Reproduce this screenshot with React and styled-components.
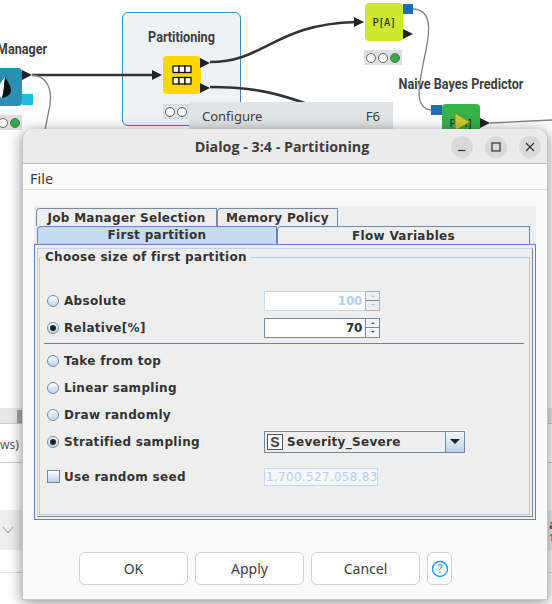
import React from 'react';
import styled, { createGlobalStyle } from 'styled-components';

const GlobalStyle = createGlobalStyle`
  html, body { margin: 0; padding: 0; background: #fff; }
  body { width: 552px; height: 604px; overflow: hidden; font-family: "DejaVu Sans", sans-serif; }
`;

const Page = styled.div`
  position: relative;
  width: 552px;
  height: 604px;
  overflow: hidden;
  background: #fff;
`;

/* workflow canvas behind the dialog */
const Annotation = styled.div`
  position: absolute;
  left: 122px;
  top: 12px;
  width: 117px;
  height: 112px;
  background: #ecf2f6;
  border: 1px solid #3f87b8;
  border-radius: 6px;
`;

const NodeLabel = styled.div`
  position: absolute;
  left: ${p => p.$x}px;
  top: ${p => p.$y}px;
  width: ${p => p.$w}px;
  text-align: center;
  white-space: nowrap;
  font: 700 14.5px Roboto, sans-serif;
  color: #3e3e3e;
  transform: scaleX(0.87);
  transform-origin: center;
`;

const Node = styled.div`
  position: absolute;
  left: ${p => p.$x}px;
  top: ${p => p.$y}px;
  width: 38px;
  height: 38px;
  background: ${p => p.$color};
  border-radius: 4px;
  display: flex;
  align-items: center;
  justify-content: center;
  font: 400 10.5px "DejaVu Sans Mono", monospace;
  letter-spacing: -0.6px;
  color: #222;
`;

const Status = styled.div`
  position: absolute;
  left: ${p => p.$x}px;
  top: ${p => p.$y}px;
  width: 38px;
  height: 15px;
  background: #dcdfde;
  display: flex;
  align-items: center;
  justify-content: ${p => p.$end ? 'flex-end' : 'center'};
  gap: 2px;
  padding-right: ${p => p.$end ? 2 : 0}px;
  box-sizing: border-box;
`;

const Lamp = styled.span`
  width: 8px;
  height: 8px;
  border-radius: 50%;
  border: 1px solid #666;
  background: ${p => p.$on ? '#2fae47' : '#fff'};
`;

const Wires = styled.svg`
  position: absolute;
  left: 0;
  top: 0;
`;

const ContextMenu = styled.div`
  position: absolute;
  left: 189px;
  top: 102px;
  width: 204px;
  height: 30px;
  box-sizing: border-box;
  padding: 0 13px 2px;
  display: flex;
  justify-content: space-between;
  align-items: center;
  background: #e2e3e5;
  font: 400 13px "Noto Sans", sans-serif;
  color: #3d3d3d;
`;

/* pieces of the bottom panel that peek out on the left and right */
const BottomStrip = styled.div`
  position: absolute;
  left: 0;
  top: ${p => p.$y}px;
  width: 552px;
  height: ${p => p.$h}px;
  box-sizing: border-box;
  background: ${p => p.$bg || 'transparent'};
  border-bottom: ${p => p.$line ? '1px solid #ccc' : 'none'};
`;

const ScrollThumb = styled.div`
  position: absolute;
  left: 17px;
  top: 410px;
  width: 6px;
  height: 13px;
  background: #a9a9a9;
`;

const PeekText = styled.div`
  position: absolute;
  left: ${p => p.$x}px;
  top: ${p => p.$y}px;
  font: ${p => p.$weight || 400} ${p => p.$size || 12}px/1 "Noto Sans", sans-serif;
  color: #555;
`;

/* dialog */
const Dialog = styled.div`
  position: absolute;
  left: 22px;
  top: 129px;
  width: 526px;
  height: 471px;
  box-sizing: border-box;
  display: flex;
  flex-direction: column;
  background: #fafafa;
  border-radius: 11px 11px 0 0;
  border: 1px solid #c4c4c4;
  border-top: none;
  box-shadow: 0 2px 14px rgba(0, 0, 0, 0.45);
`;

const TitleBar = styled.div`
  position: relative;
  height: 35px;
  flex: none;
  display: flex;
  align-items: center;
  justify-content: center;
  background: #ebebeb;
  border-radius: 11px 11px 0 0;
  border-bottom: 1px solid #bdbdbd;
  box-sizing: border-box;
  font: 700 14.3px "Open Sans", sans-serif;
  color: #3d3d3d;
  padding-right: 6px;
`;

const WindowButtons = styled.div`
  position: absolute;
  right: 6px;
  top: 7px;
  display: flex;
  gap: 12px;
`;

const WindowButton = styled.div`
  width: 22px;
  height: 22px;
  border-radius: 50%;
  background: #dadada;
  display: flex;
  align-items: center;
  justify-content: center;
`;

const MenuBar = styled.div`
  height: 26px;
  flex: none;
  box-sizing: border-box;
  padding: 3px 0 0 7px;
  display: flex;
  align-items: center;
  border-bottom: 1px solid #dedede;
  font: 400 14.5px "Noto Sans", sans-serif;
  color: #3d3d3d;
`;

const Content = styled.div`
  margin: 16px 11px 0;
  height: 314px;
  background: #eeeeee;
  box-sizing: border-box;
  padding: 2px 0 0 2px;
  display: flex;
  flex-direction: column;
`;

const TabRow = styled.div`
  display: flex;
  height: 18px;
  flex: none;
  margin-left: ${p => p.$offset || 0}px;
`;

const Tab = styled.div`
  width: ${p => p.$w}px;
  box-sizing: border-box;
  display: flex;
  align-items: center;
  justify-content: center;
  font: 700 12px "DejaVu Sans", sans-serif;
  letter-spacing: 0.3px;
  color: #333;
  white-space: nowrap;
  background: ${p => p.$active ? '#c5dbf2' : '#eeeeee'};
  border: 1px solid ${p => p.$active ? '#6382bf' : '#7a8a99'};
  border-bottom: ${p => p.$active ? '1px solid #c5dbf2' : 'none'};
  border-top-left-radius: 4px;
`;

const TabPanel = styled.div`
  flex: 1;
  margin: 0 0 0 -2px;
  box-sizing: border-box;
  border: 1px solid #6382bf;
  padding: 3px 2px 2px;
  background: #eeeeee;
`;

const InnerPanel = styled.div`
  height: 100%;
  box-sizing: border-box;
  border: 1px solid #8a9aac;
  border-color: #c2d3e6 #7a8a99 #7a8a99 #c2d3e6;
  padding: 1px 2px 1px 1px;
`;

const GroupBox = styled.fieldset`
  margin: 0;
  height: 100%;
  box-sizing: border-box;
  border: 1px solid #b8cfe6;
  padding: 23px 5px 0 7px;
  min-width: 0;
  legend {
    margin-left: -4px;
    padding: 0 3px 0 2px;
    font: 700 12px "DejaVu Sans", sans-serif;
    letter-spacing: 0.3px;
    color: #333;
  }
`;

const FormRow = styled.div`
  display: grid;
  grid-template-columns: 217px 1fr;
  align-items: center;
  height: ${p => p.$h || 27}px;
`;

const Choice = styled.label`
  display: flex;
  align-items: center;
  gap: 5px;
  font: 700 12px "DejaVu Sans", sans-serif;
  letter-spacing: 0.3px;
  color: #333;
  white-space: nowrap;
`;

const Radio = styled.span`
  width: 10px;
  height: 10px;
  flex: none;
  border-radius: 50%;
  border: 1px solid #7a8a99;
  background: linear-gradient(#fff, #bcd3ec);
  display: flex;
  align-items: center;
  justify-content: center;
  &::after {
    content: '';
    display: ${p => p.$checked ? 'block' : 'none'};
    width: 6px;
    height: 6px;
    border-radius: 50%;
    background: #222;
  }
`;

const Checkbox = styled.span`
  width: 11px;
  height: 11px;
  margin-right: -1px;
  flex: none;
  border: 1px solid #7a8a99;
  background: linear-gradient(#fff, #bcd3ec);
`;

const Spinner = styled.div`
  display: flex;
  width: 116px;
  height: 20px;
`;

const SpinnerInput = styled.div`
  flex: 1;
  box-sizing: border-box;
  background: #fff;
  border: 1px solid ${p => p.$off ? '#c5d8ee' : '#7a8a99'};
  border-right: none;
  padding-right: 3px;
  text-align: right;
  font: 700 12px/18px "DejaVu Sans", sans-serif;
  letter-spacing: -0.3px;
  color: ${p => p.$off ? '#b8cfe6' : '#333'};
`;

const SpinButtons = styled.div`
  width: 15px;
  box-sizing: border-box;
  border: 1px solid ${p => p.$off ? '#aab2ba' : '#7a8a99'};
  display: flex;
  flex-direction: column;
`;

const SpinButton = styled.div`
  flex: 1;
  background: ${p => p.$off ? '#eeeeee' : '#f2f4f7'};
  display: flex;
  align-items: center;
  justify-content: center;
  & + & { border-top: 1px solid ${p => p.$off ? '#aab2ba' : '#7a8a99'}; }
  &::after {
    content: '';
    border-left: 2px solid transparent;
    border-right: 2px solid transparent;
    ${p => p.$down ? 'border-top' : 'border-bottom'}: 2px solid ${p => p.$off ? '#b8cfe6' : '#555'};
  }
`;

const Separator = styled.div`
  height: 1px;
  background: #6382bf;
  margin: 2px 0 3px -3px;
  width: 480px;
`;

const Combo = styled.div`
  display: flex;
  width: 201px;
  height: 22px;
  box-sizing: border-box;
  border: 1px solid #6f8aa6;
`;

const ComboValue = styled.div`
  flex: 1;
  display: flex;
  align-items: center;
  gap: 4px;
  padding-left: 2px;
  background: #eeeeee;
  border-right: 1px solid #6f8aa6;
  font: 700 12px "DejaVu Sans", sans-serif;
  letter-spacing: 0.3px;
  color: #333;
`;

const TypeBadge = styled.span`
  width: 14px;
  height: 14px;
  border: 1px solid #555;
  background: #f6f6f6;
  display: flex;
  align-items: center;
  justify-content: center;
  font: 700 14px "Liberation Sans", sans-serif;
  color: #444;
`;

const ComboArrow = styled.div`
  width: 18px;
  background: linear-gradient(#f4f7fb, #bcd2ea);
  display: flex;
  align-items: center;
  justify-content: center;
  &::after {
    content: '';
    border-left: 5px solid transparent;
    border-right: 5px solid transparent;
    border-top: 5px solid #222;
  }
`;

const SeedInput = styled.div`
  width: 114px;
  height: 18px;
  box-sizing: border-box;
  overflow: hidden;
  border: 1px solid #c5d8ee;
  background: #f6f7f8;
  padding-left: 1px;
  font: 400 12px/16px "DejaVu Sans", sans-serif;
  letter-spacing: 0.3px;
  color: #b8cfe6;
  white-space: nowrap;
`;

const Footer = styled.div`
  display: flex;
  gap: 7px;
  margin: 32px 0 0 56px;
`;

const Button = styled.button`
  width: ${p => p.$w || 109}px;
  height: 33px;
  padding: 0;
  box-sizing: border-box;
  background: #fff;
  border: 1px solid #d2d2d2;
  border-radius: 6px;
  font: 400 14px "Noto Sans", sans-serif;
  color: #3d3d3d;
  display: flex;
  align-items: center;
  justify-content: center;
`;

const Wire = ({ d, heavy }) => (
  <path d={d} fill="none" stroke={heavy ? '#333' : '#808080'} strokeWidth={heavy ? 2.6 : 1.3} />
);

const Port = ({ x, y }) => <polygon points={`${x},${y} ${x + 10},${y + 5} ${x},${y + 10}`} fill="#222" />;

const Canvas = () => (
  <>
    <Annotation />
    <NodeLabel $x={122} $y={29} $w={119}>Partitioning</NodeLabel>
    <NodeLabel $x={-43} $y={41} $w={130}>Manager</NodeLabel>
    <NodeLabel $x={371} $y={76} $w={180}>Naive Bayes Predictor</NodeLabel>

    <Node $x={163} $y={56} $color="#ffd800">
      <svg width="20" height="20" viewBox="0 0 20 20">
        <g fill="#fff" stroke="#111" strokeWidth="1.3">
          {[1, 7, 13].map(x => <rect key={x} x={x} y="1" width="6" height="6.5" />)}
          {[1, 7, 13].map(x => <rect key={x} x={x} y="12.5" width="6" height="6.5" />)}
        </g>
      </svg>
    </Node>
    <Status $x={163} $y={104}><Lamp /><Lamp /><Lamp $on /></Status>

    <Node $x={365} $y={3} $color="#cde82e">P[A]</Node>
    <Status $x={364} $y={50}><Lamp /><Lamp /><Lamp $on /></Status>

    <Node $x={442} $y={104} $color="#36b24a">P[A]</Node>

    <Node $x={-16} $y={68} $color="#2a8fb0">
      <svg width="38" height="38" viewBox="0 0 38 38">
        <path d="M21 9 C18 13 14 18 14 23 C14 28 17 30 18 30 C20 24 20 15 21 9Z" fill="#fff" />
        <path d="M21 9 C24 14 27 18 27 22 C27 27 23 29 18 30 C20 24 20 15 21 9Z" fill="#111" />
      </svg>
    </Node>
    <Status $x={-16} $y={115} $end><Lamp /><Lamp /><Lamp $on /></Status>

    <Wires width="552" height="160" viewBox="0 0 552 160">
      <Wire heavy d="M32 75 L155 75" />
      <Wire heavy d="M210 62 C265 62 275 24 356 22" />
      <Wire heavy d="M210 87 C250 87 275 92 310 105" />
      <Wire d="M32 75 C48 76 52 90 50 105 L45 130" />
      <Wire d="M413 9 C432 10 430 30 426 50 C420 80 412 108 431 110" />
      <Wire d="M490 123 L552 120" />
      <Port x={22} y={70} />
      <Port x={152} y={70} />
      <Port x={200} y={58} />
      <Port x={200} y={83} />
      <Port x={354} y={17} />
      <Port x={403} y={29} />
      <Port x={480} y={118} />
      <rect x="403" y="4" width="10" height="10" fill="#1b6fb5" />
      <rect x="431" y="105" width="11" height="10" fill="#1b6fb5" />
      <rect x="22" y="94" width="11" height="11" fill="#1fbce4" />
      <polygon points="455,113 470,122 455,131" fill="#c6cf2e" stroke="#7d8a22" strokeWidth="1" />
    </Wires>

    <ContextMenu><span>Configure</span><span>F6</span></ContextMenu>

    <BottomStrip $y={408} $h={16} $bg="#e9e9e9" $line />
    <ScrollThumb />
    <PeekText $x={0} $y={439}>ws)</PeekText>
    <BottomStrip $y={424} $h={39} $line />
    <BottomStrip $y={510} $h={40} $bg="#eeeeee" />
    <BottomStrip $y={572} $h={1} $bg="#dedede" />
    <Wires width="22" height="604" viewBox="0 0 22 604">
      <path d="M3 527 L8 533 L13 527" fill="none" stroke="#999" strokeWidth="1" />
    </Wires>
    <PeekText $x={549} $y={518} $size={13} $weight={700}>a</PeekText>
    <PeekText $x={549} $y={533} $size={9}>1</PeekText>
  </>
);

const RadioRow = ({ label, checked, children }) => (
  <FormRow>
    <Choice><Radio $checked={checked} />{label}</Choice>
    {children}
  </FormRow>
);

const NumberSpinner = ({ value, off }) => (
  <Spinner>
    <SpinnerInput $off={off}>{value}</SpinnerInput>
    <SpinButtons $off={off}>
      <SpinButton $off={off} />
      <SpinButton $off={off} $down />
    </SpinButtons>
  </Spinner>
);

const App = () => (
  <Page>
    <GlobalStyle />
    <Canvas />
    <Dialog>
      <TitleBar>
        Dialog - 3:4 - Partitioning
        <WindowButtons>
          <WindowButton>
            <svg width="10" height="10" viewBox="0 0 10 10"><path d="M1 8.5 H8.5" stroke="#333" strokeWidth="1.2" /></svg>
          </WindowButton>
          <WindowButton>
            <svg width="10" height="10" viewBox="0 0 10 10"><rect x="1" y="1" width="8" height="8" fill="none" stroke="#333" strokeWidth="1.2" /></svg>
          </WindowButton>
          <WindowButton>
            <svg width="10" height="10" viewBox="0 0 10 10"><path d="M1 1 L9 9 M9 1 L1 9" stroke="#333" strokeWidth="1.2" /></svg>
          </WindowButton>
        </WindowButtons>
      </TitleBar>
      <MenuBar>File</MenuBar>
      <Content>
        <TabRow $offset={0}>
          <Tab $w={181}>Job Manager Selection</Tab>
          <Tab $w={121}>Memory Policy</Tab>
        </TabRow>
        <TabRow $offset={1}>
          <Tab $w={240} $active>First partition</Tab>
          <Tab $w={253}>Flow Variables</Tab>
        </TabRow>
        <TabPanel>
          <InnerPanel>
            <GroupBox>
              <legend>Choose size of first partition</legend>
              <RadioRow label="Absolute"><NumberSpinner value="100" off /></RadioRow>
              <RadioRow label="Relative[%]" checked><NumberSpinner value="70" /></RadioRow>
              <Separator />
              <RadioRow label="Take from top" />
              <RadioRow label="Linear sampling" />
              <RadioRow label="Draw randomly" />
              <RadioRow label="Stratified sampling" checked>
                <Combo>
                  <ComboValue><TypeBadge>S</TypeBadge>Severity_Severe</ComboValue>
                  <ComboArrow />
                </Combo>
              </RadioRow>
              <FormRow $h={43}>
                <Choice><Checkbox />Use random seed</Choice>
                <SeedInput>1.700.527.058.83</SeedInput>
              </FormRow>
            </GroupBox>
          </InnerPanel>
        </TabPanel>
      </Content>
      <Footer>
        <Button>OK</Button>
        <Button>Apply</Button>
        <Button>Cancel</Button>
        <Button $w={25}>
          <svg width="18" height="18" viewBox="0 0 18 18">
            <circle cx="9" cy="9" r="7.5" fill="none" stroke="#2196f3" strokeWidth="1.4" />
            <text x="9" y="13.2" textAnchor="middle" fontFamily="Noto Sans" fontSize="12" fill="#2196f3">?</text>
          </svg>
        </Button>
      </Footer>
    </Dialog>
  </Page>
);

export default App;
